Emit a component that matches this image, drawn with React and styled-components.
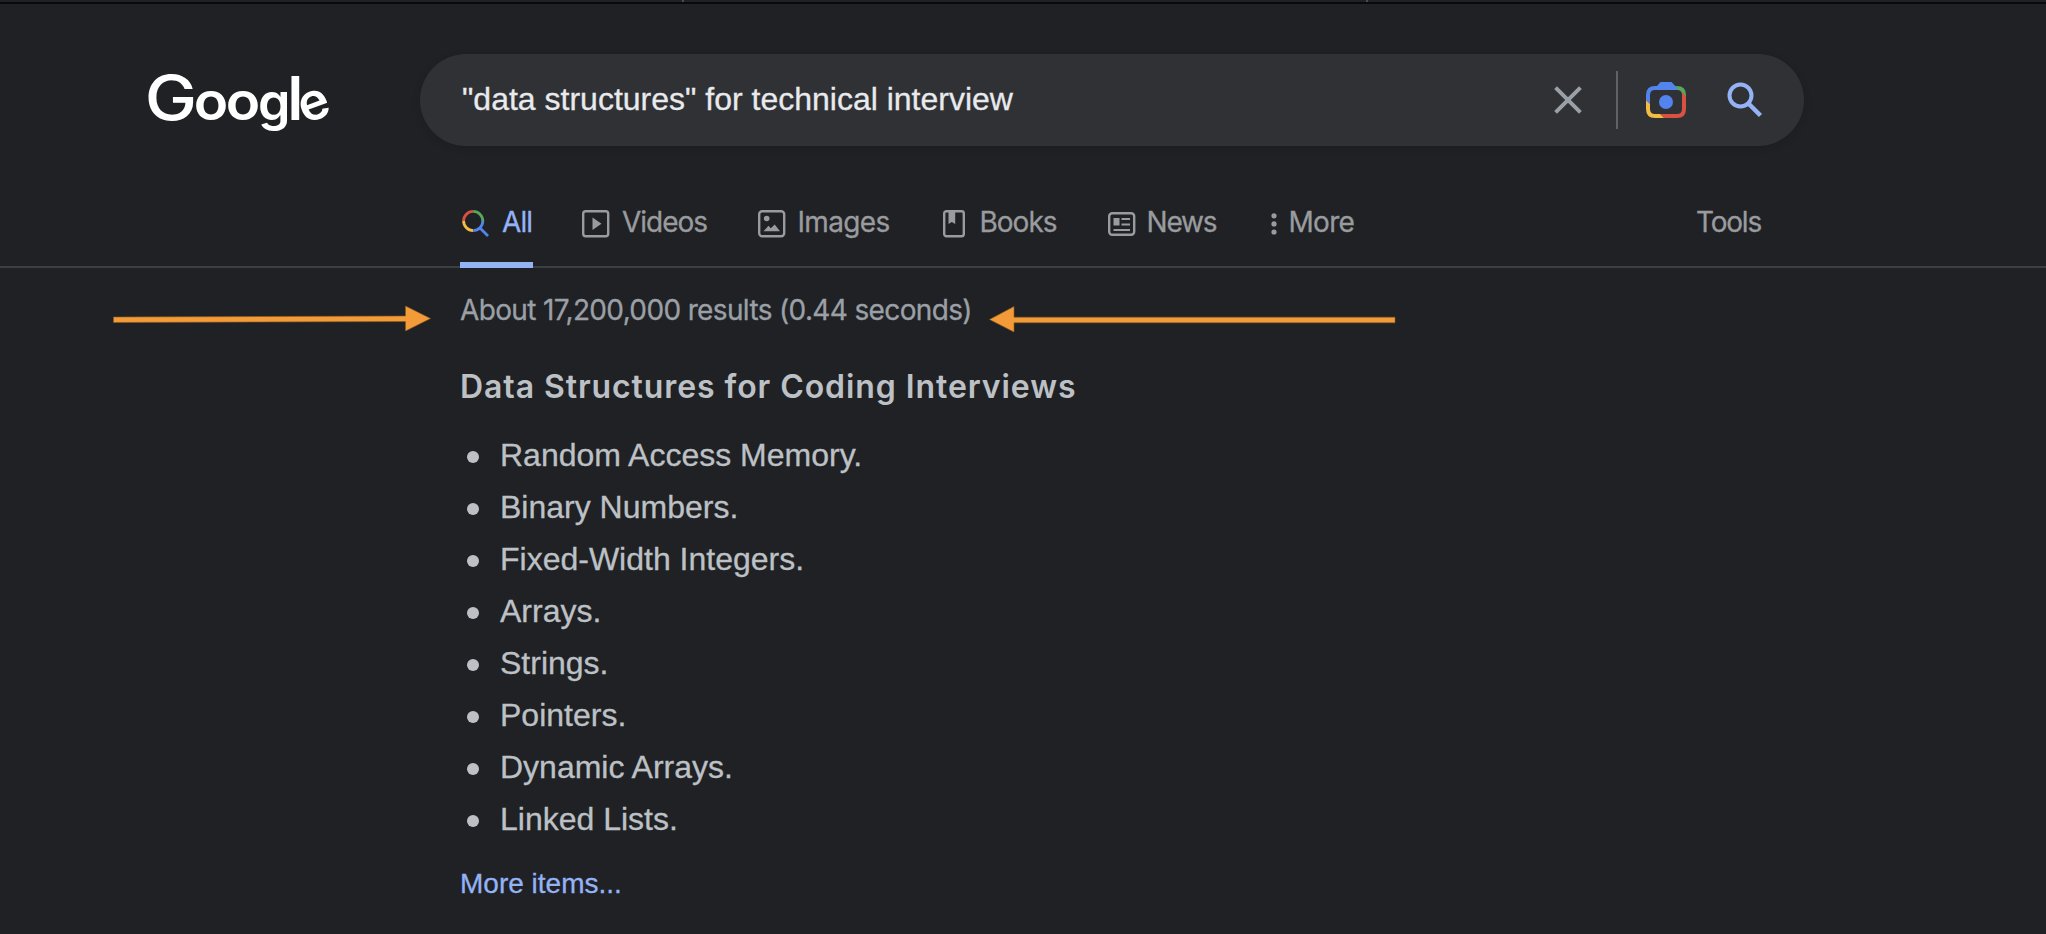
import React from "react";
import styled, { createGlobalStyle } from "styled-components";

const Global = createGlobalStyle`
  * { box-sizing: border-box; }
  body {
    margin: 0;
    background: #202124;
    color: #bdc1c6;
    font-family: "Liberation Sans", Arial, sans-serif;
  }
`;

const Page = styled.div`
  position: relative;
  min-height: 934px;
  overflow: hidden;
  -webkit-text-stroke: 0.3px currentColor;
`;

const TabStrip = styled.div`
  display: flex;
  height: 4px;
  padding-left: 682px;
  gap: 682px;
  border-bottom: 2px solid #08090a;
`;

const StripMark = styled.span`
  width: 2px;
  height: 2px;
  background: #4a4b4d;
`;

const Header = styled.header`
  display: flex;
  align-items: center;
  height: 92px;
  margin-top: 50px;
  padding-left: 140px;
`;

const Logo = styled.a`
  display: flex;
  width: 280px;

  svg {
    display: block;
    overflow: visible;
  }

  text {
    font-family: Inter, sans-serif;
    fill: #fff;
    -webkit-text-stroke: 0;
  }
`;

const SearchBox = styled.div`
  display: flex;
  align-items: center;
  width: 1384px;
  height: 92px;
  padding: 0 28px 0 42px;
  border-radius: 46px;
  background: #303134;
  box-shadow: 0 2px 6px rgba(23, 23, 23, 0.3);
`;

const Query = styled.div`
  flex: 1;
  padding-bottom: 2px;
  font-size: 32px;
  line-height: 44px;
  color: #e8eaed;
  white-space: nowrap;
`;

const IconButton = styled.button`
  display: flex;
  align-items: center;
  justify-content: center;
  width: ${(p) => p.$width}px;
  height: 60px;
  padding: 0;
  border: 0;
  background: none;
`;

const Divider = styled.span`
  width: 2px;
  height: 58px;
  background: #5f6368;
`;

const Nav = styled.nav`
  display: flex;
  align-items: stretch;
  height: 122px;
  padding: 54px 0 0 460px;
  border-bottom: 2px solid #3c4043;
`;

const Tab = styled.a`
  display: flex;
  align-items: flex-start;
  height: 68px;
  width: ${(p) => p.$width}px;
  margin-right: ${(p) => p.$after ?? 0}px;
  border-bottom: ${(p) => (p.$active ? "6px solid #94b3f5" : "0")};
  color: ${(p) => (p.$active ? "#94b3f5" : "#999b9f")};

  svg {
    flex: none;
    display: block;
  }
`;

const IconSlot = styled.span`
  margin: 10px 0 0 ${(p) => p.$lead}px;
`;

const TabLabel = styled.span`
  margin-left: ${(p) => p.$gap ?? 0}px;
  font: 400 28px/44px Inter, "Open Sans", sans-serif;
  letter-spacing: ${(p) => p.$spacing}px;
  white-space: nowrap;
`;

const Results = styled.main`
  padding: 20px 0 0 460px;
`;

const Stats = styled.div`
  font: 400 28px/44px Inter, "Open Sans", sans-serif;
  letter-spacing: -0.64px;
  color: #9aa0a6;
`;

const Title = styled.h2`
  margin: 31px 0 0;
  font: 600 32px/48px Inter, "Open Sans", sans-serif;
  letter-spacing: 0.92px;
  color: #bdc1c6;
  -webkit-text-stroke: 0;
`;

const Items = styled.ul`
  margin: 18px 0 0;
  padding: 0;
  list-style: none;
`;

const Item = styled.li`
  display: flex;
  align-items: center;
  height: 52px;
  padding-left: 7px;
  font-size: 32px;
  line-height: 52px;

  &::before {
    content: "";
    width: 12px;
    height: 12px;
    margin: 4px 21px 0 0;
    border-radius: 50%;
    background: #bdc1c6;
  }
`;

const MoreLink = styled.a`
  display: block;
  margin-top: 17px;
  font-size: 28px;
  line-height: 44px;
  color: #94b3f5;
`;

const Annotations = styled.svg`
  position: absolute;
  left: 0;
  top: 290px;
  pointer-events: none;
`;

const letters = [
  { ch: "G", size: 62, weight: 500, transform: "translate(4.7 66) scale(1.13 1)" },
  { ch: "o", size: 53, weight: 600, transform: "translate(53.8 65.7) scale(1.07 1)" },
  { ch: "o", size: 53, weight: 600, transform: "translate(85.8 65.7) scale(1.07 1)" },
  { ch: "g", size: 52, weight: 600, transform: "translate(118 65.7)" },
  { ch: "l", size: 60, weight: 600, transform: "translate(147.500 65.7)" },
  { ch: "e", size: 52, weight: 600, transform: "rotate(-20 174 51) translate(158.600 65.5)" },
];

const GoogleLogo = () => (
  <svg width="200" height="92" viewBox="0 0 200 92" aria-label="Google">
    {letters.map((l, i) => (
      <text key={i} fontSize={l.size} fontWeight={l.weight} transform={l.transform}>
        {l.ch}
      </text>
    ))}
  </svg>
);

const ClearIcon = () => (
  <svg width="28" height="28" viewBox="0 0 28 28" stroke="#9aa0a6" strokeWidth="4">
    <path d="M1.6 1.6L26.4 26.4M26.4 1.6L1.6 26.4" />
  </svg>
);

const LensIcon = () => (
  <svg width="40" height="36" viewBox="0 0 40 36">
    <path d="M0 19V13Q0 4 9 4H11L14.5 0H25.5L33 8H9Q4 8 4 13V22Z" fill="#5383ec" />
    <path d="M29 4H31Q40 4 40 13V14.5L36 12Q35.5 8.5 32 8Z" fill="#58a55c" />
    <path d="M36 10L40 14.5V27Q40 36 31 36H18L14 32H31Q36 32 36 27Z" fill="#d95140" />
    <path d="M0 18.5L4 22V27Q4 32 9 32H14L18 36H9Q0 36 0 27Z" fill="#f2bd42" />
    <circle cx="20" cy="20" r="7" fill="#5383ec" />
  </svg>
);

const SearchIcon = () => (
  <svg width="36" height="36" viewBox="0 0 36 36" fill="none" stroke="#94b3f5">
    <circle cx="13.5" cy="13.5" r="11" strokeWidth="4" />
    <path d="M22 22L33.5 33.5" strokeWidth="4.5" />
  </svg>
);

const AllIcon = () => (
  <svg width="28" height="28" viewBox="0 0 28 28" fill="none" strokeWidth="2.8">
    <path d="M1.6 11A9.6 9.6 0 0 1 11.2 1.4" stroke="#d95140" />
    <path d="M11.2 1.4A9.6 9.6 0 0 1 20.8 11" stroke="#58a55c" />
    <path d="M1.6 11A9.6 9.6 0 0 0 11.2 20.6" stroke="#f2bd42" />
    <path d="M11.2 20.6A9.6 9.6 0 0 0 20.8 11M17.5 17.5L26 26" stroke="#5383ec" />
  </svg>
);

const VideosIcon = () => (
  <svg width="28" height="28" viewBox="0 0 28 28">
    <rect x="1.2" y="1.2" width="25" height="25" rx="2.5" fill="none" stroke="currentColor" strokeWidth="2.4" />
    <path d="M10.5 7.5V20L19.5 13.7Z" fill="currentColor" />
  </svg>
);

const ImagesIcon = () => (
  <svg width="28" height="28" viewBox="0 0 28 28">
    <rect x="1.2" y="1.2" width="25" height="25" rx="3" fill="none" stroke="currentColor" strokeWidth="2.4" />
    <circle cx="8.7" cy="8.5" r="2.8" fill="currentColor" />
    <path d="M5.5 21.3L10.5 15.8L12.8 18.2L16.7 14.5L22 21.3Z" fill="currentColor" />
  </svg>
);

const BooksIcon = () => (
  <svg width="22" height="28" viewBox="0 0 22 28">
    <rect x="1.2" y="1.2" width="19.6" height="25" rx="2.2" fill="none" stroke="currentColor" strokeWidth="2.4" />
    <path d="M5.5 2V14L8.8 12L12.2 14V2Z" fill="currentColor" />
  </svg>
);

const NewsIcon = () => (
  <svg width="28" height="28" viewBox="0 0 28 28">
    <rect x="1.2" y="3.2" width="25" height="21.6" rx="3" fill="none" stroke="currentColor" strokeWidth="2.4" />
    <path d="M5.5 8H11.5V15.5H5.5ZM13.5 8H22V10H13.5ZM13.5 13.5H22V15.5H13.5ZM5.5 19H22V21H5.5Z" fill="currentColor" />
  </svg>
);

const MoreIcon = () => (
  <svg width="6" height="28" viewBox="0 0 6 28" fill="currentColor">
    <circle cx="3" cy="5.800" r="2.6" />
    <circle cx="3" cy="13.900" r="2.6" />
    <circle cx="3" cy="22" r="2.6" />
  </svg>
);

const tabs = [
  { label: "All", icon: AllIcon, lead: 2, gap: 12, width: 73, after: 49, spacing: -0.9, active: true },
  { label: "Videos", icon: VideosIcon, gap: 12, width: 176, spacing: -1.0 },
  { label: "Images", icon: ImagesIcon, gap: 11.5, width: 185, spacing: -0.65 },
  { label: "Books", icon: BooksIcon, gap: 14.5, width: 165, spacing: -1.0 },
  { label: "News", icon: NewsIcon, gap: 10.5, width: 163, spacing: -1.2 },
  { label: "More", icon: MoreIcon, gap: 11.5, width: 425, spacing: -0.7 },
  { label: "Tools", width: 100, spacing: -1.2 },
];

const listItems = [
  "Random Access Memory.",
  "Binary Numbers.",
  "Fixed-Width Integers.",
  "Arrays.",
  "Strings.",
  "Pointers.",
  "Dynamic Arrays.",
  "Linked Lists.",
];

export default function App() {
  return (
    <Page>
      <Global />
      <TabStrip>
        <StripMark />
        <StripMark />
      </TabStrip>
      <Header>
        <Logo>
          <GoogleLogo />
        </Logo>
        <SearchBox>
          <Query>"data structures" for technical interview</Query>
          <IconButton $width={96} aria-label="Clear">
            <ClearIcon />
          </IconButton>
          <Divider />
          <IconButton $width={96} aria-label="Search by image">
            <LensIcon />
          </IconButton>
          <IconButton $width={62} aria-label="Search">
            <SearchIcon />
          </IconButton>
        </SearchBox>
      </Header>
      <Nav>
        {tabs.map(({ label, icon: Icon, lead = 0, ...t }) => (
          <Tab key={label} $active={t.active} $width={t.width} $after={t.after}>
            {Icon && (
              <IconSlot $lead={lead}>
                <Icon />
              </IconSlot>
            )}
            <TabLabel $gap={t.gap} $spacing={t.spacing}>
              {label}
            </TabLabel>
          </Tab>
        ))}
      </Nav>
      <Results>
        <Stats>About 17,200,000 results (0.44 seconds)</Stats>
        <Title>Data Structures for Coding Interviews</Title>
        <Items>
          {listItems.map((text) => (
            <Item key={text}>{text}</Item>
          ))}
        </Items>
        <MoreLink>More items...</MoreLink>
      </Results>
      <Annotations width="1420" height="60" viewBox="0 290 1420 60" fill="#f29b38" stroke="#8a5a22" strokeWidth="0.6">
        <path d="M113.5 317L405.5 316V306L430.5 318.5L405.5 331V321.5L113.5 322.5Z" />
        <path d="M1395 317.2H1014V306.5L989.5 319.5L1014 332V322.8H1395Z" />
      </Annotations>
    </Page>
  );
}
